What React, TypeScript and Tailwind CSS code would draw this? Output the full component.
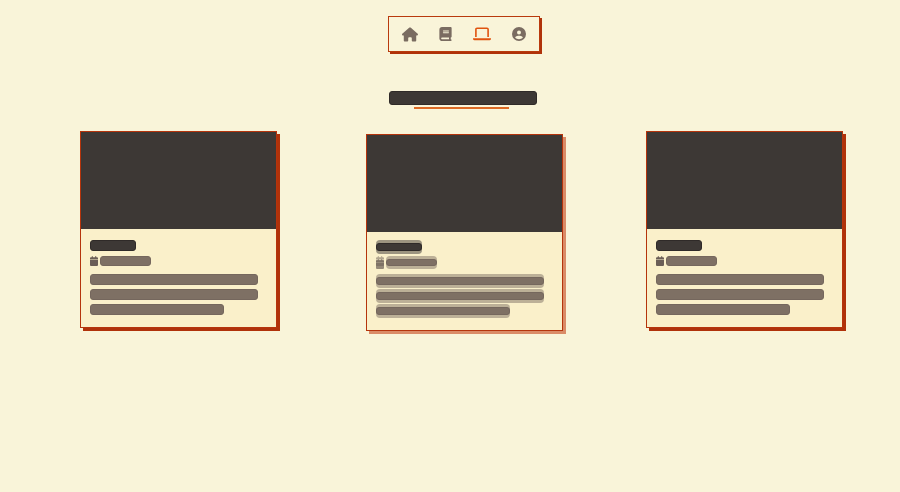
import { FaHouse, FaBook, FaCircleUser, FaCalendar } from "react-icons/fa6";

type BarProps = { className: string; tone: "dark" | "soft"; blurred: boolean };

// A redacted line of text; in the card that is in motion it leaves a trail.
function Bar({ className, tone, blurred }: BarProps) {
  const fill = tone === "dark" ? "bg-[#3d3835] border-[#2f2a28]" : "bg-[#7e7064] border-[#75675d]";
  if (!blurred) {
    return <div className={`rounded-[3px] border ${fill} ${className}`} />;
  }
  const trail = tone === "dark" ? "bg-[#3d3835]/50" : "bg-[#7e7064]/50";
  return (
    <div className={`relative ${className}`}>
      <div className={`absolute inset-x-0 -top-[3px] bottom-0 rounded-[4px] ${trail}`} />
      <div className={`absolute inset-x-0 top-0 bottom-[3px] rounded-[3px] border ${fill}`} />
    </div>
  );
}

function LaptopIcon() {
  return (
    <svg viewBox="0 0 18 14" className="h-[14px] w-[18px]" fill="none" aria-hidden="true">
      <path
        d="M2.9 10V2.3a1.1 1.1 0 0 1 1.1-1.1H14a1.1 1.1 0 0 1 1.1 1.1V10"
        stroke="currentColor"
        strokeWidth="1.6"
      />
      <path d="M0 11.2h18v.5a1.6 1.6 0 0 1-1.6 1.5H1.6A1.6 1.6 0 0 1 0 11.7z" fill="currentColor" />
    </svg>
  );
}

function Card({ moving = false }: { moving?: boolean }) {
  return (
    <article
      className={`w-[197px] border border-[#b5340c] bg-[#faf0ca] ${
        moving
          ? "translate-x-[3px] translate-y-[3px] shadow-[3px_3px_0_0_#da8b67]"
          : "shadow-[3px_3px_0_0_#b0320a]"
      }`}
    >
      <div className="h-[97px] bg-[#3d3835]" />
      <div className="pt-[11px] pr-[18px] pb-3 pl-[9px]">
        <Bar tone="dark" blurred={moving} className="h-[11px] w-[46px]" />
        <div className="mt-[5px] flex h-[10px] items-center gap-[2px]">
          <span className="relative h-[10px] w-2 text-[#6b5e56]">
            <FaCalendar className={`h-[10px] w-2 ${moving ? "opacity-70" : ""}`} preserveAspectRatio="none" />
            {moving && (
              <FaCalendar className="absolute -top-[3px] left-0 h-[10px] w-2 opacity-50" preserveAspectRatio="none" />
            )}
          </span>
          <Bar tone="soft" blurred={moving} className="h-[10px] w-[51px]" />
        </div>
        <div className="mt-2 flex flex-col gap-1">
          <Bar tone="soft" blurred={moving} className="h-[11px] w-full" />
          <Bar tone="soft" blurred={moving} className="h-[11px] w-full" />
          <Bar tone="soft" blurred={moving} className="h-[11px] w-4/5" />
        </div>
      </div>
    </article>
  );
}

export default function App() {
  return (
    <div className="min-h-screen bg-[#f9f4d9] pt-4 pr-[57px] pl-20 font-['Liberation_Sans',sans-serif]">
      <header className="flex justify-center">
        <nav className="ml-[5px] flex h-9 items-center gap-[21px] border border-[#b93a0d] bg-[#f9f4d9] px-[13px] text-[#7a6c61] shadow-[2px_2px_0_0_#b0320a]">
          <a href="#home" aria-label="Home">
            <FaHouse className="h-[15px] w-4" />
          </a>
          <a href="#blog" aria-label="Blog">
            <FaBook className="h-[14px] w-[13px]" />
          </a>
          <a href="#projects" aria-label="Projects" aria-current="page" className="text-[#e0530f]">
            <LaptopIcon />
          </a>
          <a href="#about" aria-label="About">
            <FaCircleUser className="h-[14px] w-[14px]" />
          </a>
        </nav>
      </header>
      <main>
        <div className="mt-[39px] flex flex-col items-center">
          <div className="ml-[3px] h-[14px] w-[148px] rounded-[3px] border border-[#2f2a28] bg-[#3d3835]" />
          <div className="mt-[2px] h-[2px] w-[95px] bg-[#dc6a24]" />
        </div>
        <section className="mt-[22px] flex justify-between">
          <Card />
          <Card moving />
          <Card />
        </section>
      </main>
    </div>
  );
}
